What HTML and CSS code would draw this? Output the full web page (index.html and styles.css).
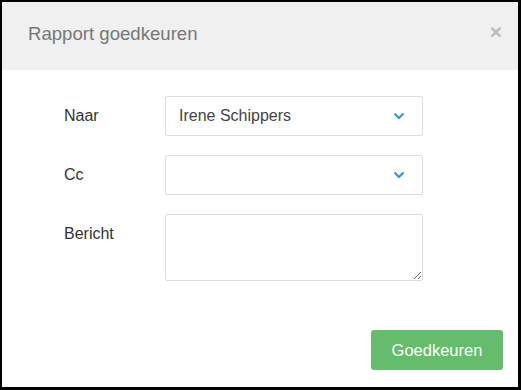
FILE: index.html
```html
<!DOCTYPE html>
<html lang="nl">
<head>
    <meta charset="UTF-8">
    <title>Rapport goedkeuren</title>
    <link rel="stylesheet" href="styles.css">
</head>
<body>
    <div class="modal">
        <div class="modal-header">
            <h4>Rapport goedkeuren</h4>
            <span class="close">&times;</span>
        </div>
        <div class="modal-body">
            <div class="form-row">
                <label>Naar</label>
                <div class="select">
                    <span>Irene Schippers</span>
                    <svg width="12" height="8" viewBox="0 0 12 8"><path d="M1.5 1.5 L6 6 L10.5 1.5" fill="none" stroke="#2b9ac6" stroke-width="2"/></svg>
                </div>
            </div>
            <div class="form-row">
                <label>Cc</label>
                <div class="select">
                    <span></span>
                    <svg width="12" height="8" viewBox="0 0 12 8"><path d="M1.5 1.5 L6 6 L10.5 1.5" fill="none" stroke="#2b9ac6" stroke-width="2"/></svg>
                </div>
            </div>
            <div class="form-row">
                <label class="top">Bericht</label>
                <textarea></textarea>
            </div>
        </div>
        <div class="modal-footer">
            <button>Goedkeuren</button>
        </div>
    </div>
</body>
</html>
```

FILE: styles.css
```css
html, body {
    margin: 0;
    height: 100%;
}
body {
    font-family: "Liberation Sans", Arial, sans-serif;
    background: #fff;
}
.modal {
    box-sizing: border-box;
    width: 521px;
    height: 390px;
    border-style: solid;
    border-color: #000;
    border-width: 2px 3px 3px 2px;
    background: #fff;
    display: flex;
    flex-direction: column;
}
.modal-header {
    height: 68px;
    background: #f0f0f0;
    display: flex;
    align-items: center;
    justify-content: space-between;
    padding: 0 16px 0 26px;
}
.modal-header h4 {
    margin: 0 0 4px 0;
    font-size: 18.6px;
    font-weight: normal;
    color: #777;
}
.close {
    font-size: 21px;
    font-weight: bold;
    color: #bbb;
    line-height: 1;
    margin-bottom: 10px;
}
.modal-body {
    padding: 26px 0 0 62px;
}
.form-row {
    display: flex;
    align-items: center;
    margin-bottom: 19px;
}
.form-row label {
    width: 101px;
    font-size: 16px;
    color: #333;
}
.form-row label.top {
    align-self: flex-start;
    padding-top: 11px;
}
.select {
    box-sizing: border-box;
    width: 258px;
    height: 40px;
    border: 1px solid #ddd;
    border-radius: 2px;
    display: flex;
    align-items: center;
    justify-content: space-between;
    padding: 0 17px 0 13px;
    font-size: 16px;
    color: #444;
}
textarea {
    box-sizing: border-box;
    width: 258px;
    height: 67px;
    border: 1px solid #ddd;
    border-radius: 2px;
    margin: 0;
}
.modal-footer {
    margin-top: auto;
    display: flex;
    justify-content: flex-end;
    padding: 0 15px 17px 0;
}
button {
    width: 132px;
    height: 40px;
    background-color: #64bc6c;
    color: #fff;
    border: none;
    border-radius: 3px;
    font-family: inherit;
    font-size: 16.5px;
}
```
